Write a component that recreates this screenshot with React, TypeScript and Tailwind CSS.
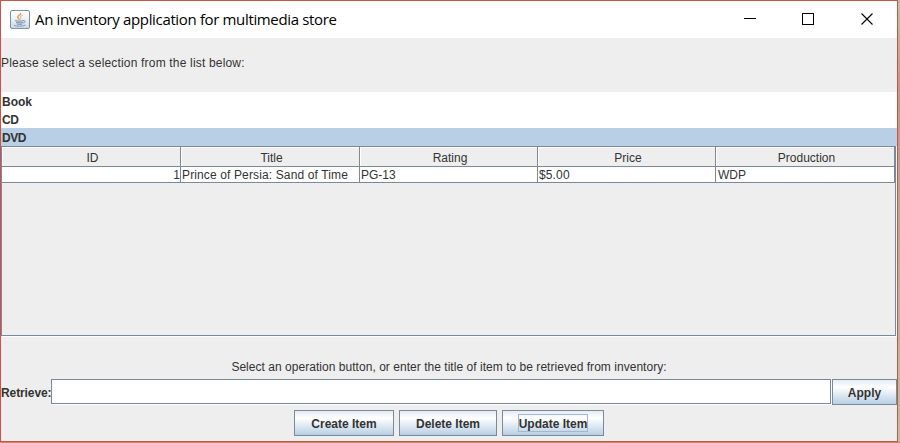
import React from "react";

const columns = [
  { name: "ID", value: "1", width: "w-[179px]", cell: "justify-end" },
  { name: "Title", value: "Prince of Persia: Sand of Time", width: "w-[179px]", cell: "pl-px tracking-[0.13px]" },
  { name: "Rating", value: "PG-13", width: "w-[178px]", cell: "pl-px" },
  { name: "Price", value: "$5.00", width: "w-[178px]", cell: "pl-px tracking-[0.13px]" },
  { name: "Production", value: "WDP", width: "w-[179px]", cell: "pl-[2px]" },
];

const kinds = [
  { name: "Book", style: "" },
  { name: "CD", style: "tracking-[-0.4px]" },
  { name: "DVD", style: "bg-[#b8cfe5] tracking-[-0.4px]" },
];

function JavaIcon() {
  return (
    <svg width="20" height="20" viewBox="0 0 20 20">
      <defs>
        <linearGradient id="tile" x1="0" y1="0" x2="0" y2="1">
          <stop offset="0" stopColor="#ffffff" />
          <stop offset="0.45" stopColor="#eef2f6" />
          <stop offset="1" stopColor="#c9d5e1" />
        </linearGradient>
      </defs>
      <rect x="0.5" y="0.5" width="19" height="18" rx="1.5" fill="url(#tile)" stroke="#7e90a3" />
      <g fill="none" strokeLinecap="round">
        <path d="M10.500 3.500c.6 1.800-3.400 2.100-2.800 3.900.2.800 1 1.100 1.300 1.800" stroke="#e79a52" strokeWidth="1.500" />
        <path d="M12.300 5.500c-1.800.8-2.600 1.500-1.400 2.500.4.500 0 .9-.4 1.200" stroke="#e9ab70" strokeWidth="1" />
        <path d="M5.500 10.700c1.500.6 5.500.6 7.500 0M6.500 12.400c1.500.6 4.500.6 6 0M7 14c1.400.5 3.600.5 5 0" stroke="#6d8ba8" strokeWidth="1" />
        <path d="M13.500 10.600c2.300-.5 2.300 1.700.2 2.300" stroke="#6d8ba8" strokeWidth="0.900" />
        <path d="M4.500 15.600c2.500 1 8 .9 10.500-.3" stroke="#7f9bb5" strokeWidth="1" />
      </g>
    </svg>
  );
}

function Button({ label, size, focused = false }: { label: string; size: string; focused?: boolean }) {
  return (
    <button
      className={`flex shrink-0 items-center justify-center border border-[#7a8a99] bg-linear-to-b from-[#e3ecf4] via-white via-30% to-[#b8cfe5] pt-px text-[12px] font-bold whitespace-nowrap ${size}`}
    >
      <span className={focused ? "-mt-px flex h-[18px] w-[70px] items-center justify-center border border-[#a3b8cc] pt-px" : ""}>
        {label}
      </span>
    </button>
  );
}

export default function App() {
  return (
    <div className="flex h-[443px] w-[900px] border-b border-[#c9836f] bg-linear-to-b from-[#b9c7a0] via-[#cf9183] via-20% to-[#b9c397] font-['Liberation_Sans',Arial,sans-serif] text-[12px] text-[#333]">
      <main className="flex h-[442px] w-[898px] flex-col border border-[#c4554b] bg-[#eee]">
        <header className="flex h-[37px] shrink-0 items-center bg-white pl-[9px] text-black">
          <JavaIcon />
          <h1 className="ml-[5px] w-[320px] pb-[2px] font-['Open_Sans','Noto_Sans',sans-serif] text-[15px] leading-5 tracking-[-0.35px] whitespace-nowrap">
            An inventory application for multimedia store
          </h1>
          <svg className="mr-[23px] mb-px ml-auto" width="130" height="14" viewBox="0 0 130 14" fill="none" stroke="#000" shapeRendering="crispEdges">
            <path d="M0 6.500h12" />
            <rect x="58.500" y="1.500" width="11" height="11" />
            <path d="M117.500 1.500l11 11m0-11l-11 11" shapeRendering="auto" strokeWidth="1.100" />
          </svg>
        </header>
        <p className="flex h-[54px] shrink-0 items-center pb-[5px]">
          <span className="tracking-[0.18px]">Please select a selection from the list below:</span>
        </p>
        <ul className="shrink-0 bg-white font-bold leading-[18px]">
          {kinds.map((k) => (
            <li key={k.name} className={`h-[18px] pt-px pl-px ${k.style}`}>
              {k.name}
            </li>
          ))}
        </ul>
        <section className="h-[190px] w-[895px] shrink-0 border border-[#7a8a99] shadow-[1px_1px_0_#fff]">
          <div className="flex">
            {columns.map((c) => (
              <div key={c.name} className={`shrink-0 ${c.width}`}>
                <div className="flex h-5 items-center justify-center border-r border-b border-[#7a8a99] pt-[2px] pl-[3px] shadow-[inset_1px_1px_0_#fff]">
                  {c.name}
                </div>
                <div className={`flex h-4 items-center border-r border-b border-[#7a8a99] bg-white whitespace-nowrap ${c.cell}`}>
                  <span>{c.value}</span>
                </div>
              </div>
            ))}
          </div>
        </section>
        <footer className="pt-[23px]">
          <p className="flex h-5 items-center justify-center pb-[5px]">
            <span className="tracking-[0.035px]">
              Select an operation button, or enter the title of item to be retrieved from inventory:
            </span>
          </p>
          <div className="flex h-[26px]">
            <label className="flex w-[50px] shrink-0 items-center pt-px font-bold tracking-[-0.1px] whitespace-nowrap">Retrieve:</label>
            <input className="mr-px h-[25px] w-[780px] shrink-0 border border-[#7a8a99] bg-white shadow-[1px_1px_0_#fff] outline-none" />
            <Button label="Apply" size="h-[26px] w-[65px]" />
          </div>
          <div className="mt-[5px] flex pl-[293px]">
            <Button label="Create Item" size="mr-[5px] h-[26px] w-[100px]" />
            <Button label="Delete Item" size="mr-[5px] h-[26px] w-[98px]" />
            <Button label="Update Item" size="h-[26px] w-[102px]" focused />
          </div>
        </footer>
      </main>
    </div>
  );
}
